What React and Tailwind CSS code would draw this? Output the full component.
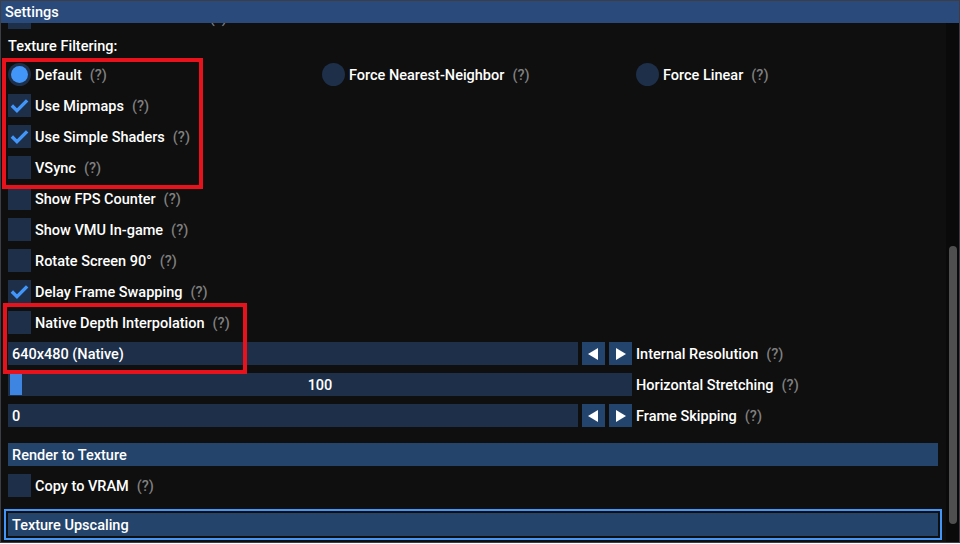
import React from 'react';

// Dear ImGui-like palette
const FRAME = 'bg-[#1d2f49]';

const Label = ({ children, className = '' }) => (
  <span className={`whitespace-nowrap pt-[2px] ${className}`}>{children}</span>
);

const Help = () => <Label className="ml-[8px] text-[#808080]">(?)</Label>;

const CheckMark = () => (
  <svg width="23" height="23" viewBox="0 0 23 23" className="block">
    <polyline
      points="3.85,11.5 8.95,16.6 19.15,6.4"
      fill="none"
      stroke="#4296fa"
      strokeWidth="3.4"
      strokeLinejoin="miter"
    />
  </svg>
);

const Checkbox = ({ label, checked }) => (
  <div className="flex h-[23px] items-center">
    <div className={`h-[23px] w-[23px] shrink-0 ${FRAME}`}>{checked && <CheckMark />}</div>
    <Label className="ml-[4px]">{label}</Label>
    <Help />
  </div>
);

const Radio = ({ label, selected }) => (
  <div className="flex h-[23px] items-center">
    <div className={`flex h-[23px] w-[23px] shrink-0 items-center justify-center rounded-full ${FRAME}`}>
      {selected && <div className="h-[17px] w-[17px] rounded-full bg-[#4296fa]" />}
    </div>
    <Label className="ml-[4px]">{label}</Label>
    <Help />
  </div>
);

const Arrow = ({ dir }) => (
  <button className="flex h-[23px] w-[23px] items-center justify-center bg-[#23456d]">
    <svg width="12" height="12" viewBox="0 0 12 12">
      {dir === 'left' ? (
        <polygon points="10,0 10,12 0,6" fill="#fff" />
      ) : (
        <polygon points="1,0 1,12 11,6" fill="#fff" />
      )}
    </svg>
  </button>
);

const Stepper = ({ value, label }) => (
  <div className="flex h-[23px] items-center">
    <div className={`flex h-[23px] w-[570px] items-center px-[4px] ${FRAME}`}>
      <Label>{value}</Label>
    </div>
    <div className="ml-[4px] flex gap-[4px]">
      <Arrow dir="left" />
      <Arrow dir="right" />
    </div>
    <Label className="ml-[4px]">{label}</Label>
    <Help />
  </div>
);

const Slider = ({ value, label }) => (
  <div className="flex h-[23px] items-center">
    <div className={`relative flex h-[23px] w-[624px] items-center justify-center ${FRAME}`}>
      <div className="absolute left-[2px] top-[1px] h-[21px] w-[12px] bg-[#3d85e0]" />
      <Label className="relative">{value}</Label>
    </div>
    <Label className="ml-[4px]">{label}</Label>
    <Help />
  </div>
);

const Header = ({ title, focused }) => (
  <div
    className={`flex h-[23px] items-center bg-[#24446b] px-[4px] ${
      focused ? 'outline-2 outline-offset-2 outline-[#4296fa]' : ''
    }`}
  >
    <Label>{title}</Label>
  </div>
);

export default function App() {
  return (
    <div className="relative flex h-[543px] w-[960px] flex-col overflow-hidden border border-[#3d3d46] bg-[#0f0f0f] font-['Roboto',sans-serif] text-[14.5px] font-medium text-white">
      <div className="relative z-10 flex h-[22px] shrink-0 items-center bg-[#294a7a] px-[4px]">
        <Label>Settings</Label>
      </div>

      <div className="flex min-h-0 flex-1">
        <div className="min-w-0 flex-1 overflow-hidden pl-[7px] pr-[8px]">
          <div className="-mt-[17px] flex flex-col gap-[8px]">
            <Checkbox label="Widescreen Game Cheats" />
            <div className="flex h-[18px] items-center">
              <Label>Texture Filtering:</Label>
            </div>
            <div className="grid grid-cols-[314px_314px_1fr]">
              <Radio label="Default" selected />
              <Radio label="Force Nearest-Neighbor" />
              <Radio label="Force Linear" />
            </div>
            <Checkbox label="Use Mipmaps" checked />
            <Checkbox label="Use Simple Shaders" checked />
            <Checkbox label="VSync" />
            <Checkbox label="Show FPS Counter" />
            <Checkbox label="Show VMU In-game" />
            <Checkbox label="Rotate Screen 90°" />
            <Checkbox label="Delay Frame Swapping" checked />
            <Checkbox label="Native Depth Interpolation" />
            <Stepper value="640x480 (Native)" label="Internal Resolution" />
            <Slider value="100" label="Horizontal Stretching" />
            <Stepper value="0" label="Frame Skipping" />
            <div className="mt-[8px]">
              <Header title="Render to Texture" />
            </div>
            <Checkbox label="Copy to VRAM" />
            <div className="mt-[8px]">
              <Header title="Texture Upscaling" focused />
            </div>
          </div>
        </div>

        <div className="w-[13px] shrink-0 bg-[#0a0a0a] pt-[223px]">
          <div className="ml-[3px] h-[278px] w-[8px] rounded-full bg-[#4f4f4f]" />
        </div>
      </div>

      {/* annotation boxes */}
      <div className="pointer-events-none absolute left-[1px] top-[57px] h-[131px] w-[201px] border-4 border-[#e8121c]" />
      <div className="pointer-events-none absolute left-[2px] top-[302px] h-[71px] w-[244px] border-4 border-[#e8121c]" />
    </div>
  );
}
